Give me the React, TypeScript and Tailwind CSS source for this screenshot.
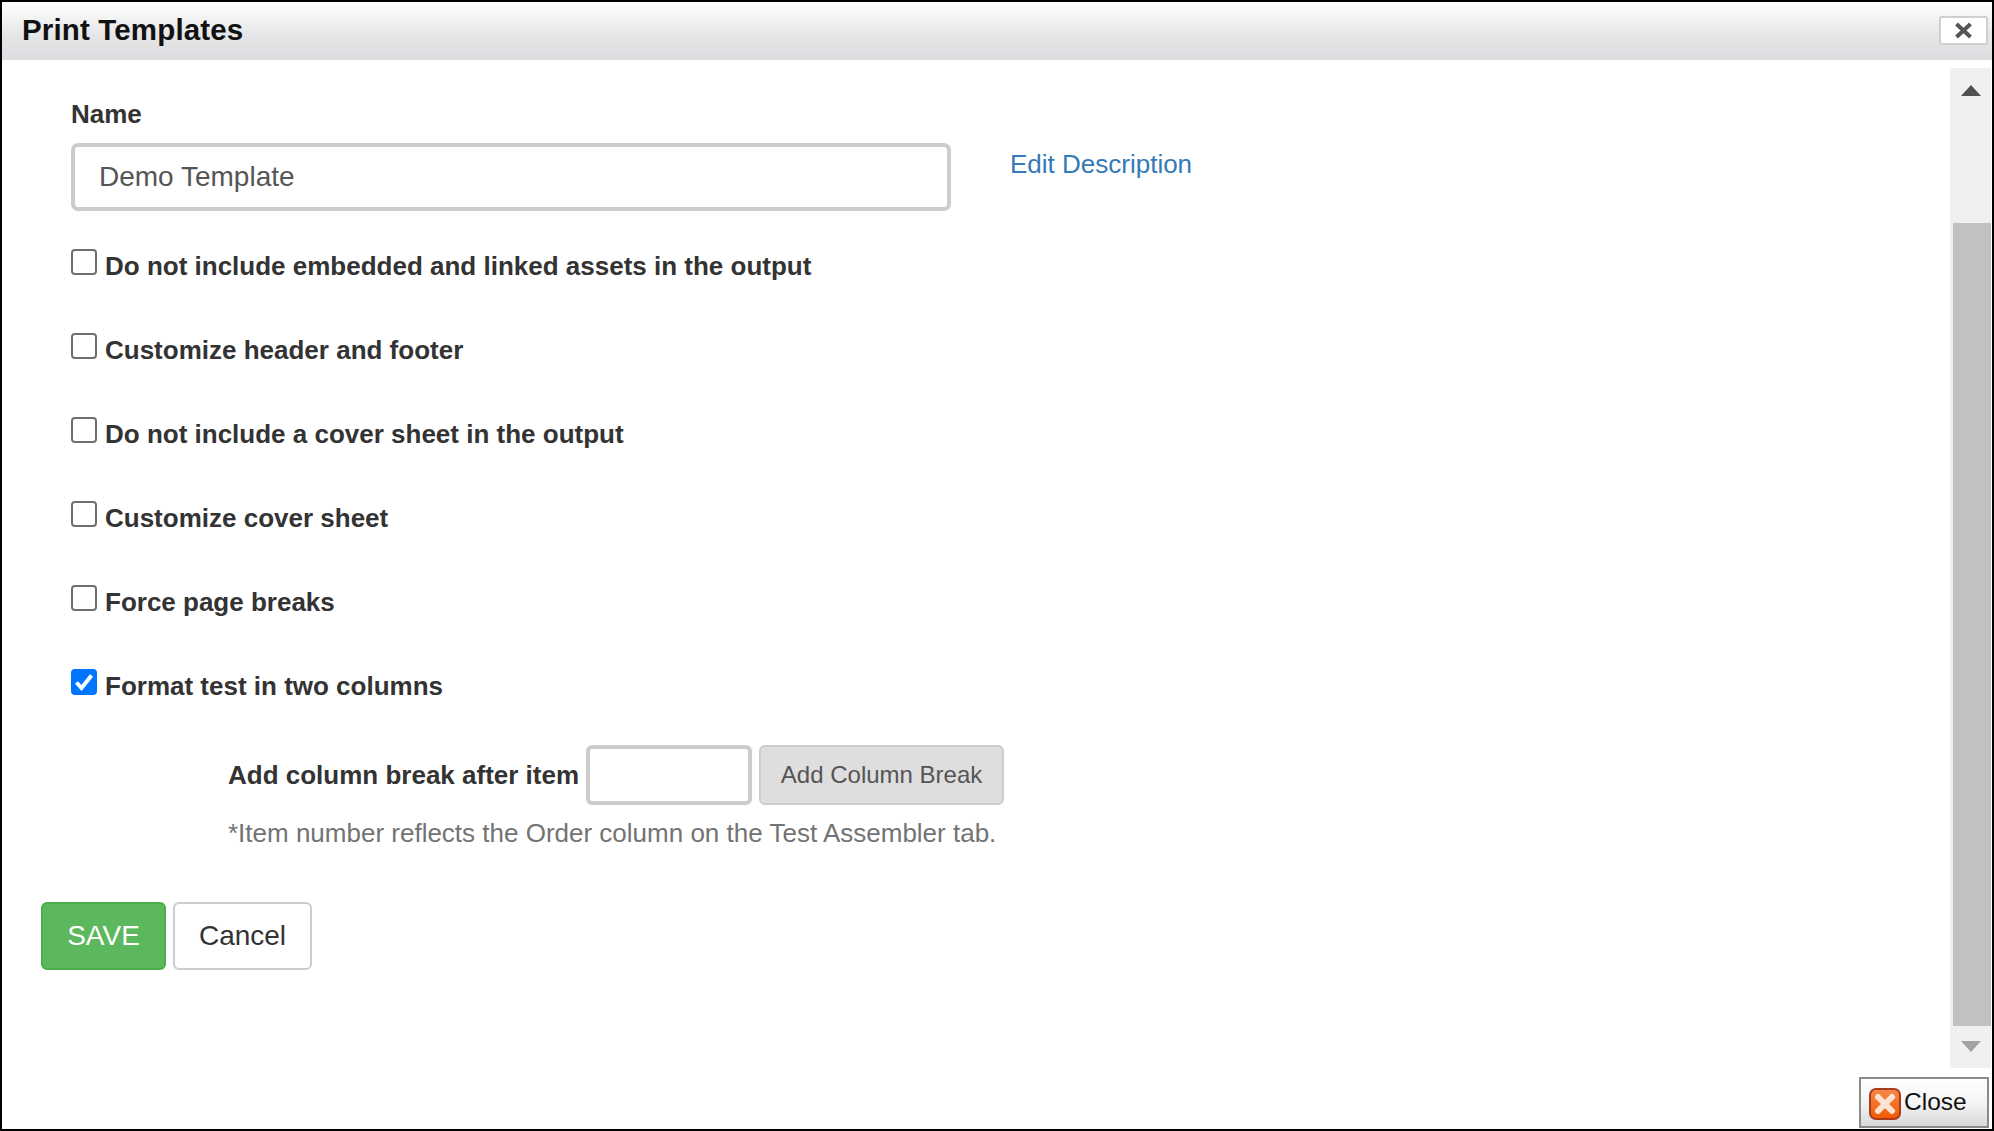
export default function App() {
  const rows: [string, boolean][] = [
    ["Do not include embedded and linked assets in the output", false],
    ["Customize header and footer", false],
    ["Do not include a cover sheet in the output", false],
    ["Customize cover sheet", false],
    ["Force page breaks", false],
    ["Format test in two columns", true],
  ];
  return (
    <div className="w-[1994px] h-[1131px] border-2 border-black bg-white flex flex-col font-['Liberation_Sans',Arial,sans-serif] overflow-hidden">
      <div className="h-[58px] shrink-0 bg-gradient-to-b from-[#ffffff] via-[#e4e5e6] via-[60%] to-[#dcdde0] flex items-center justify-between pl-[20px] pr-[4px]">
        <div className="text-[29.5px] font-bold text-[#111] leading-none tracking-[0.15px] mb-[2px]">Print Templates</div>
        <button className="w-[49px] h-[29px] mb-[1px] bg-white border-2 border-[#cfcfcf] rounded-[3px] flex items-center justify-center">
          <svg width="19" height="17" viewBox="0 0 19 17">
            <path d="M2.5 2 L16.5 15 M16.5 2 L2.5 15" stroke="#555" strokeWidth="4" />
          </svg>
        </button>
      </div>
      <div className="flex-1 flex min-h-0 pt-[8px]">
        <div className="flex-1 min-w-0 flex flex-col">
          <div className="pl-[69px] pt-[31px]">
            <div className="text-[26px] font-bold text-[#333] leading-[30px]">Name</div>
            <div className="flex items-start mt-[14px]">
              <input
                readOnly
                value="Demo Template"
                className="w-[880px] h-[68px] border-[4px] border-[#ccc] rounded-[7px] pl-[24px] text-[28px] text-[#555] outline-none"
              />
              <a className="ml-[59px] mt-[5px] text-[26px] text-[#337ab7] leading-[32px]">Edit Description</a>
            </div>
            <div className="mt-[23px] flex flex-col gap-[34px]">
              {rows.map(([label, checked]) => (
                <label key={label} className="flex items-start h-[50px]">
                  <span className="relative w-[26px] h-[26px] mt-[15px] shrink-0">
                    <input
                      type="checkbox"
                      defaultChecked={checked}
                      className="appearance-none block w-[26px] h-[26px] m-0 rounded-[4px] border-2 border-[#6f6f6f] bg-white checked:bg-[#0075ff] checked:border-[#0075ff]"
                    />
                    {checked && (
                      <svg width="26" height="26" viewBox="0 0 26 26" className="absolute left-0 top-0 pointer-events-none">
                        <path d="M5.5 13.5 L10.5 19 L20.5 6.5" fill="none" stroke="#fff" strokeWidth="4" />
                      </svg>
                    )}
                  </span>
                  <span className="ml-[8px] mt-[17px] text-[26px] font-bold text-[#333] leading-[30px] whitespace-nowrap">{label}</span>
                </label>
              ))}
            </div>
            <div className="pl-[157px] mt-[41px]">
              <div className="flex items-center">
                <span className="text-[26px] font-bold text-[#333] whitespace-nowrap">Add column break after item</span>
                <input className="ml-[7px] w-[166px] h-[60px] border-[4px] border-[#ccc] rounded-[6px] outline-none" readOnly />
                <button className="ml-[7px] w-[245px] h-[60px] bg-[#dedede] border-2 border-[#ccc] rounded-[6px] text-[24px] text-[#555]">Add Column Break</button>
              </div>
              <div className="mt-[13px] text-[26px] text-[#737373] leading-[30px] whitespace-nowrap">*Item number reflects the Order column on the Test Assembler tab.</div>
            </div>
          </div>
          <div className="pl-[39px] mt-[54px] flex gap-[7px]">
            <button className="w-[125px] h-[68px] bg-[#5cb85c] border-2 border-[#4cae4c] rounded-[6px] text-white text-[28px]">SAVE</button>
            <button className="w-[139px] h-[68px] bg-white border-2 border-[#ccc] rounded-[6px] text-[#333] text-[28px]">Cancel</button>
          </div>
        </div>
        <div className="w-[41px] h-[1000px] shrink-0 mr-[1px] bg-[#f0f0f0] flex flex-col items-center relative">
          <div className="h-[155px] flex items-start justify-center pt-[17px]">
            <svg width="20" height="11" viewBox="0 0 20 11"><path d="M10 0 L20 11 H0 Z" fill="#505050" /></svg>
          </div>
          <div className="w-[38px] ml-[2px] h-[803px] bg-[#c1c1c1]" />
          <div className="flex-1 flex items-start justify-center pt-[15px]">
            <svg width="20" height="11" viewBox="0 0 20 11"><path d="M0 0 H20 L10 11 Z" fill="#a3a3a3" /></svg>
          </div>
        </div>
      </div>
      <div className="absolute left-[1859px] top-[1077px] w-[130px] h-[51px] border-[2px] border-[#8a8a8a] bg-gradient-to-b from-[#ffffff] via-[#f5f5f5] to-[#d8d9da] flex items-center pl-[8px] pt-[2px] text-[24.5px] text-[#111]">
        <svg width="32" height="32" viewBox="0 0 32 32" className="shrink-0">
          <defs>
            <linearGradient id="cg" x1="0" y1="0" x2="0" y2="1">
              <stop offset="0" stopColor="#f5894a" />
              <stop offset="1" stopColor="#f25a00" />
            </linearGradient>
          </defs>
          <rect x="1" y="1" width="30" height="30" rx="6" fill="url(#cg)" stroke="#a83a20" strokeWidth="2" />
          <path d="M9 9 L23 23 M23 9 L9 23" stroke="#fde3d4" strokeWidth="6" strokeLinecap="round" />
        </svg>
        <span className="ml-[3px] mb-[3px]">Close</span>
      </div>
    </div>
  );
}
